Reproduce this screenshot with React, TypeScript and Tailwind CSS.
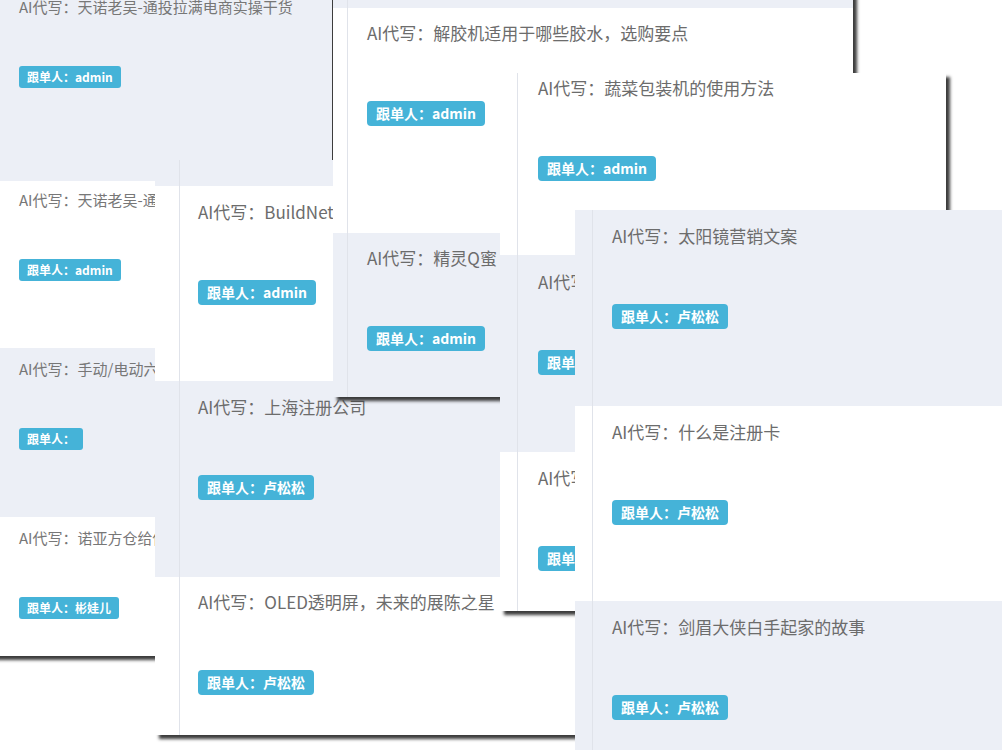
type Row = {
  light: boolean;
  h: string;
  pt: string;
  title?: string;
  who?: string;
};

type Panel = {
  pos: string;
  gutter: string;
  pad: string;
  small?: boolean;
  shadow?: boolean;
  line?: boolean;
  rows: Row[];
};

// stacked screenshots of the follow-up list, back to front
const PANELS: Panel[] = [
  {
    pos: "left-[-10px] top-[-12px] w-[342px]",
    gutter: "w-[10px]",
    pad: "pl-[19px]",
    small: true,
    shadow: true,
    line: false,
    rows: [
      { light: true, h: "h-[193px]", pt: "pt-[10px]", title: "AI代写：天诺老吴-通投拉满电商实操干货", who: "admin" },
      { light: false, h: "h-[167px]", pt: "pt-[10px]", title: "AI代写：天诺老吴-通投拉满电商实操干货", who: "admin" },
      { light: true, h: "h-[169px]", pt: "pt-[12px]", title: "AI代写：手动/电动六角螺丝刀的区别", who: "" },
      { light: false, h: "h-[139px]", pt: "pt-[12px]", title: "AI代写：诺亚方仓给你一个家", who: "彬娃儿" },
    ],
  },
  {
    pos: "left-[155px] top-[160px] w-[440px]",
    gutter: "w-[25px]",
    pad: "pl-[18px]",
    shadow: true,
    line: true,
    rows: [
      { light: true, h: "h-[26px]", pt: "pt-0" },
      { light: false, h: "h-[195px]", pt: "pt-4", title: "AI代写：BuildNet区块链", who: "admin" },
      { light: true, h: "h-[196px]", pt: "pt-4", title: "AI代写：上海注册公司", who: "卢松松" },
      { light: false, h: "h-[158px]", pt: "pt-[15px]", title: "AI代写：OLED透明屏，未来的展陈之星", who: "卢松松" },
    ],
  },
  {
    pos: "left-[333px] top-[-8px] w-[520px]",
    gutter: "w-[15px]",
    pad: "pl-[19px]",
    shadow: true,
    line: true,
    rows: [
      { light: true, h: "h-[16px]", pt: "pt-0" },
      { light: false, h: "h-[225px]", pt: "pt-[15px]", title: "AI代写：解胶机适用于哪些胶水，选购要点", who: "admin" },
      { light: true, h: "h-[164px]", pt: "pt-[15px]", title: "AI代写：精灵Q蜜 美容仪", who: "admin" },
    ],
  },
  {
    pos: "left-[500px] top-[73px] w-[446px]",
    gutter: "w-[18px]",
    pad: "pl-[20px]",
    shadow: true,
    line: true,
    rows: [
      { light: false, h: "h-[182px]", pt: "pt-[5px]", title: "AI代写：蔬菜包装机的使用方法", who: "admin" },
      { light: true, h: "h-[197px]", pt: "pt-[17px]", title: "AI代写：注册公司流程", who: "卢松松" },
      { light: false, h: "h-[159px]", pt: "pt-4", title: "AI代写：代理记账", who: "卢松松" },
    ],
  },
  {
    pos: "left-[575px] top-[210px] w-[440px]",
    gutter: "w-[18px]",
    pad: "pl-[19px]",
    shadow: false,
    line: true,
    rows: [
      { light: true, h: "h-[196px]", pt: "pt-[16px]", title: "AI代写：太阳镜营销文案", who: "卢松松" },
      { light: false, h: "h-[195px]", pt: "pt-4", title: "AI代写：什么是注册卡", who: "卢松松" },
      { light: true, h: "h-[200px]", pt: "pt-4", title: "AI代写：剑眉大侠白手起家的故事", who: "卢松松" },
    ],
  },
];

function Card({ p }: { p: Panel }) {
  return (
    <div
      className={`absolute flex flex-col overflow-hidden ${p.pos} ${
        p.shadow ? "shadow-[4px_4px_3px_rgba(40,40,40,0.9)]" : ""
      }`}
    >
      {p.rows.map((row, i) => (
        <div
          key={i}
          className={`flex shrink-0 ${row.h} ${row.light ? "bg-[#eceff6]" : "bg-white"}`}
        >
          <div
            className={`${p.gutter} shrink-0 ${p.line ? "border-r border-[#e0e3ea]" : ""}`}
          />
          <div className={`flex flex-col items-start ${p.pad} ${row.pt}`}>
            {row.title && (
              <div
                className={
                  p.small
                    ? "whitespace-nowrap text-[15px] leading-[18px] text-[#777]"
                    : "whitespace-nowrap text-[17px] leading-5 text-[#6c6c6c]"
                }
              >
                {row.title}
              </div>
            )}
            {row.who !== undefined && (
              <span
                className={
                  p.small
                    ? "mt-[50px] inline-flex h-[22px] items-center whitespace-nowrap rounded-[3px] bg-[#45b3d8] px-[8px] text-[12px] font-bold text-white"
                    : "mt-[58px] inline-flex h-[25px] items-center whitespace-nowrap rounded-[4px] bg-[#45b3d8] px-[9px] text-[14px] font-bold text-white"
                }
              >
                跟单人：{row.who}
              </span>
            )}
          </div>
        </div>
      ))}
    </div>
  );
}

export default function App() {
  return (
    <div className="relative h-[750px] w-[1002px] overflow-hidden bg-white font-['Noto_Sans_CJK_SC',sans-serif]">
      {PANELS.map((p, i) => (
        <Card key={i} p={p} />
      ))}
    </div>
  );
}
